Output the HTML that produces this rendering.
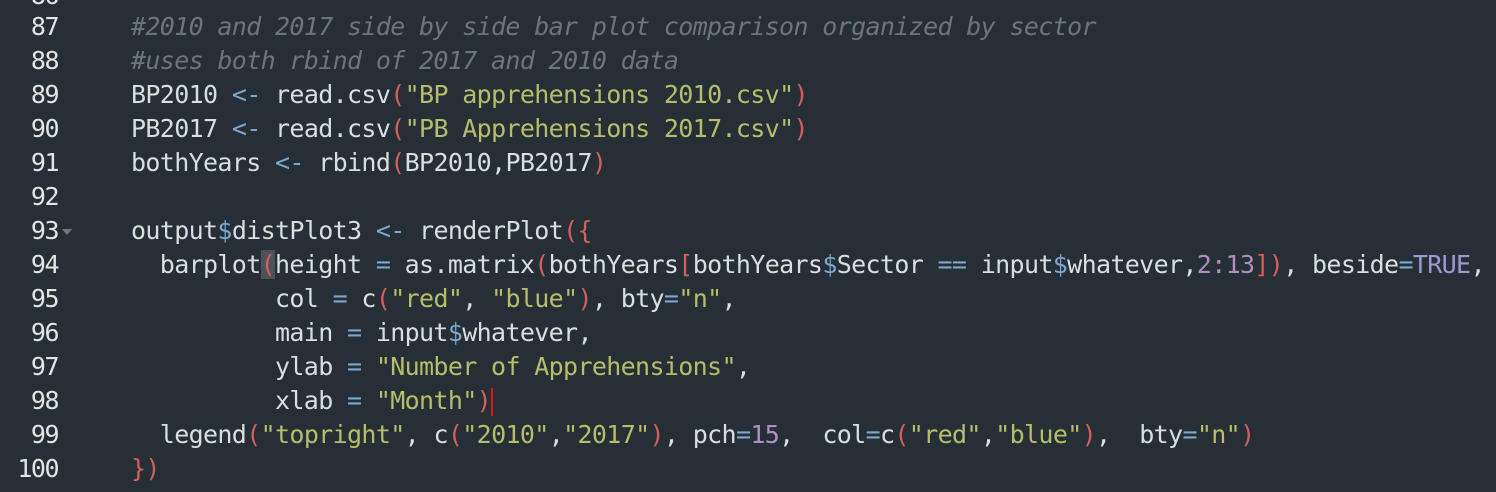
<!DOCTYPE html>
<html><head><meta charset="utf-8"><style>
body{margin:0;width:1496px;height:492px;background:#262f36;overflow:hidden;font-family:"DejaVu Sans Mono","Liberation Mono",monospace;font-size:25px;letter-spacing:-0.65px;}
.l{position:absolute;left:0;height:34px;line-height:33px;white-space:pre;color:#d9dee0;}
.n{position:absolute;left:0;width:58px;text-align:right;color:#e4e4e4;letter-spacing:-1.5px}
.c{position:absolute;left:73.4px;}
.cm{color:#6b757b;font-style:italic}
.op{color:#7fa6cb}
.s{color:#b8bd6c}
.p{color:#d4605c}
.num{color:#b08fc0}
.k{color:#9b9bd2}
.hl{background:#4a5358}
.tri{position:absolute;left:62px;top:15px;width:0;height:0;border-left:5px solid transparent;border-right:5px solid transparent;border-top:6px solid #777;}
.cur{position:absolute;left:491px;top:388px;width:2px;height:28px;background:#e0141e}
</style></head><body>
<div class="l" style="top:-21px"><span class="n">86</span></div>
<div class="l" style="top:10px"><span class="n">87</span><span class="c">    <span class="cm">#2010 and 2017 side by side bar plot comparison organized by sector</span></span></div>
<div class="l" style="top:44px"><span class="n">88</span><span class="c">    <span class="cm">#uses both rbind of 2017 and 2010 data</span></span></div>
<div class="l" style="top:78px"><span class="n">89</span><span class="c">    BP2010 <span class="op">&lt;-</span> read.csv<span class="p">(</span><span class="s">"BP apprehensions 2010.csv"</span><span class="p">)</span></span></div>
<div class="l" style="top:112px"><span class="n">90</span><span class="c">    PB2017 <span class="op">&lt;-</span> read.csv<span class="p">(</span><span class="s">"PB Apprehensions 2017.csv"</span><span class="p">)</span></span></div>
<div class="l" style="top:146px"><span class="n">91</span><span class="c">    bothYears <span class="op">&lt;-</span> rbind<span class="p">(</span>BP2010,PB2017<span class="p">)</span></span></div>
<div class="l" style="top:180px"><span class="n">92</span></div>
<div class="l" style="top:214px;width:1496px"><span class="n">93</span><span class="tri"></span><span class="c">    output<span class="op">$</span>distPlot3 <span class="op">&lt;-</span> renderPlot<span class="p">({</span></span></div>
<div class="l" style="top:248px"><span class="n">94</span><span class="c">      barplot<span class="p hl">(</span>height <span class="op">=</span> as.matrix<span class="p">(</span>bothYears<span class="p">[</span>bothYears<span class="op">$</span>Sector <span class="op">==</span> input<span class="op">$</span>whatever,<span class="num">2:13</span><span class="p">])</span>, beside<span class="op">=</span><span class="k">TRUE</span>,</span></div>
<div class="l" style="top:282px"><span class="n">95</span><span class="c">              col <span class="op">=</span> c<span class="p">(</span><span class="s">"red"</span>, <span class="s">"blue"</span><span class="p">)</span>, bty<span class="op">=</span><span class="s">"n"</span>,</span></div>
<div class="l" style="top:316px"><span class="n">96</span><span class="c">              main <span class="op">=</span> input<span class="op">$</span>whatever,</span></div>
<div class="l" style="top:350px"><span class="n">97</span><span class="c">              ylab <span class="op">=</span> <span class="s">"Number of Apprehensions"</span>,</span></div>
<div class="l" style="top:384px"><span class="n">98</span><span class="c">              xlab <span class="op">=</span> <span class="s">"Month"</span><span class="p">)</span></span></div>
<div class="l" style="top:418px"><span class="n">99</span><span class="c">      legend<span class="p">(</span><span class="s">"topright"</span>, c<span class="p">(</span><span class="s">"2010"</span>,<span class="s">"2017"</span><span class="p">)</span>, pch<span class="op">=</span><span class="num">15</span>,  col<span class="op">=</span>c<span class="p">(</span><span class="s">"red"</span>,<span class="s">"blue"</span><span class="p">)</span>,  bty<span class="op">=</span><span class="s">"n"</span><span class="p">)</span></span></div>
<div class="l" style="top:452px"><span class="n">100</span><span class="c">    <span class="p">})</span></span></div>
<div class="cur"></div>
</body></html>
